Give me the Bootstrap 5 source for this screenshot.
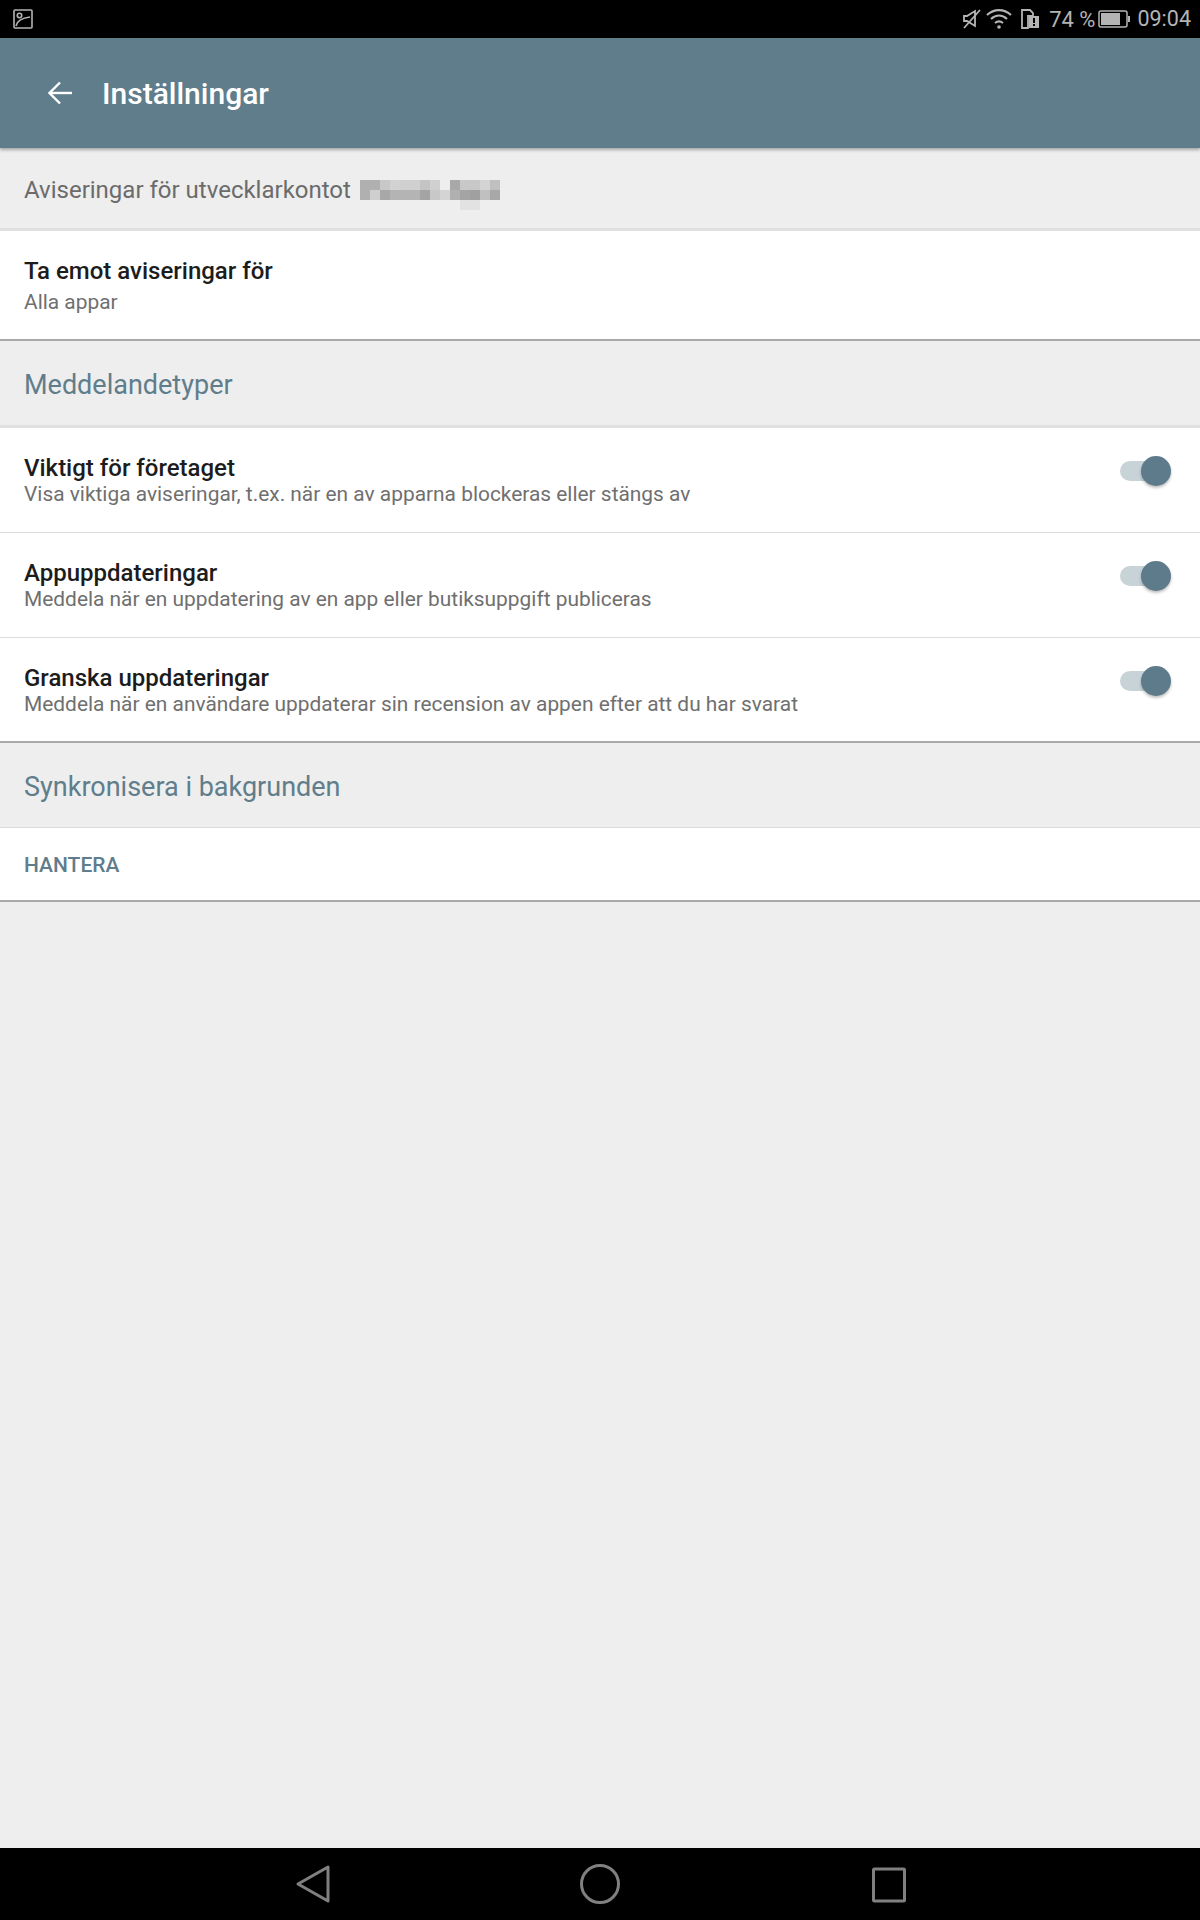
<!DOCTYPE html>
<html lang="sv">
<head>
  <meta charset="UTF-8">
  <meta name="viewport" content="width=device-width, initial-scale=1.0">
  <title>Inställningar</title>
  <link href="https://cdn.jsdelivr.net/npm/bootstrap@5.3.2/dist/css/bootstrap.min.css" rel="stylesheet">
  <style>
    body {
      height: 1920px;
      background-color: #eeeeee;
      font-family: Roboto, "Liberation Sans", sans-serif;
    }

    .status-bar {
      height: 38px;
      background-color: #000;
      color: #b4b4b4;
      font-size: 22px;
      padding: 0 9px 0 13px;
    }

    .status-wifi {
      margin-left: 5px;
    }

    .status-pct {
      margin: 0 3px 0 9px;
    }

    .status-time {
      margin-left: 7px;
      font-size: 21.5px;
    }

    .app-bar {
      height: 110px;
      padding-left: 48px;
      gap: 30px;
      background-color: #607d8b;
      color: #fff;
      font-size: 30px;
      font-weight: 500;
      box-shadow: 0 2px 3px rgba(0, 0, 0, 0.3);
    }

    .account-line {
      height: 83px;
      padding: 4px 24px 0;
      gap: 9px;
      color: #6b6b6b;
      font-size: 24px;
      border-bottom: 3px solid #e0e0e0;
    }

    .account-mask {
      margin-top: 10px;
    }

    .pref-row {
      background-color: #fff;
      padding-left: 24px;
      padding-right: 28px;
      border-bottom: 1px solid #dcdcdc;
    }

    .pref-row.last-row {
      border-bottom: 2px solid #a9a9a9;
    }

    .pref-single {
      height: 110px;
      padding-top: 26px;
    }

    .pref-toggle {
      height: 105px;
      padding-top: 26px;
    }

    .pref-title {
      color: #1c1c1c;
      font-size: 24px;
      font-weight: 500;
      line-height: 28px;
    }

    .pref-sub {
      color: #6f6f6f;
      font-size: 20.9px;
      line-height: 24px;
    }

    .pref-single .pref-sub {
      margin-top: 5px;
    }

    .section-head {
      color: #607d8b;
      font-size: 27px;
      padding: 4px 0 0 24px;
      height: 87px;
      border-bottom: 3px solid #e0e0e0;
    }

    .section-head.thin {
      height: 85px;
      border-bottom: 1px solid #dcdcdc;
    }

    .manage-row {
      height: 74px;
      padding-top: 3px;
      color: #607d8b;
      font-size: 21px;
      font-weight: 500;
    }

    .switch-track {
      position: relative;
      width: 45px;
      height: 20px;
      margin-top: 7px;
      margin-right: 7px;
      border-radius: 10px;
      background-color: #c8d3d8;
    }

    .switch-knob {
      position: absolute;
      top: -5px;
      right: -6px;
      width: 30px;
      height: 30px;
      border-radius: 50%;
      background-color: #5d7b8a;
      box-shadow: 0 2px 3px rgba(0, 0, 0, 0.25);
    }

    .nav-bar {
      height: 72px;
      background-color: #000;
    }

    .nav-bar svg {
      position: absolute;
      top: 16px;
    }

    .nav-back { left: 295px; }
    .nav-home { left: 579px; }
    .nav-recent { left: 868px; }
  </style>
</head>
<body class="d-flex flex-column">

  <div class="status-bar d-flex align-items-center flex-shrink-0">
    <svg width="20" height="20" viewBox="0 0 20 20" fill="none" stroke="#b4b4b4" stroke-width="1.6">
      <rect x="1" y="1" width="18" height="18" rx="1"/>
      <circle cx="6.5" cy="6.5" r="2.2"/>
      <path d="M3 17c1-5 5-8 14-9"/>
    </svg>
    <div class="ms-auto d-flex align-items-center">
      <svg width="18" height="20" viewBox="0 0 18 20" fill="none" stroke="#b4b4b4" stroke-width="1.8">
        <path d="M1 7h3l8-5v15l-8-5H1z"/>
        <path d="M1 19L17 1"/>
      </svg>
      <svg class="status-wifi" width="26" height="20" viewBox="0 0 26 20" fill="none" stroke="#b4b4b4" stroke-width="2.2">
        <path d="M1 6c7-6.500 17-6.500 24 0"/>
        <path d="M5 10c5-4.500 11-4.500 16 0"/>
        <path d="M9 14c2.500-2 5.500-2 8 0"/>
        <circle cx="13" cy="18" r="1.800" fill="#b4b4b4" stroke="none"/>
      </svg>
      <svg class="ms-2" width="20" height="20" viewBox="0 0 20 20">
        <path d="M2 1h8l3 3v3H8v12H2z" fill="none" stroke="#b4b4b4" stroke-width="1.800"/>
        <rect x="9" y="7" width="10" height="12" fill="#b4b4b4"/>
        <rect x="13" y="9" width="2" height="5" fill="#000"/>
        <rect x="13" y="15" width="2" height="2" fill="#000"/>
      </svg>
      <span class="status-pct">74 %</span>
      <svg width="32" height="18" viewBox="0 0 32 18">
        <rect x="1" y="1" width="28" height="16" rx="2" fill="none" stroke="#b4b4b4" stroke-width="1.500"/>
        <rect x="3" y="3" width="19" height="12" fill="#b4b4b4"/>
        <rect x="30" y="6" width="2" height="6" fill="#b4b4b4"/>
      </svg>
      <span class="status-time">09:04</span>
    </div>
  </div>

  <div class="app-bar d-flex align-items-center flex-shrink-0 position-relative">
    <svg width="24" height="24" viewBox="0 0 24 24" fill="none" stroke="#fff" stroke-width="2.400">
      <path d="M24 12H2"/>
      <path d="M12 1.500L1.500 12 12 22.500"/>
    </svg>
    <span>Inställningar</span>
  </div>

  <main class="flex-grow-1">
    <div class="account-line d-flex align-items-center">
      <span>Aviseringar för utvecklarkontot</span>
      <svg width="140" height="30" viewBox="0 0 140 30" class="account-mask" id="mask"></svg>
    </div>

    <div class="pref-row last-row pref-single">
      <div class="pref-title">Ta emot aviseringar för</div>
      <div class="pref-sub">Alla appar</div>
    </div>

    <div class="section-head d-flex align-items-center">Meddelandetyper</div>

    <div class="pref-row pref-toggle d-flex justify-content-between align-items-start">
      <div>
        <div class="pref-title">Viktigt för företaget</div>
        <div class="pref-sub">Visa viktiga aviseringar, t.ex. när en av apparna blockeras eller stängs av</div>
      </div>
      <div class="switch-track"><div class="switch-knob"></div></div>
    </div>
    <div class="pref-row pref-toggle d-flex justify-content-between align-items-start">
      <div>
        <div class="pref-title">Appuppdateringar</div>
        <div class="pref-sub">Meddela när en uppdatering av en app eller butiksuppgift publiceras</div>
      </div>
      <div class="switch-track"><div class="switch-knob"></div></div>
    </div>
    <div class="pref-row last-row pref-toggle d-flex justify-content-between align-items-start">
      <div>
        <div class="pref-title">Granska uppdateringar</div>
        <div class="pref-sub">Meddela när en användare uppdaterar sin recension av appen efter att du har svarat</div>
      </div>
      <div class="switch-track"><div class="switch-knob"></div></div>
    </div>

    <div class="section-head thin d-flex align-items-center">Synkronisera i bakgrunden</div>

    <div class="pref-row last-row manage-row d-flex align-items-center">HANTERA</div>
  </main>

  <div class="nav-bar flex-shrink-0 position-relative">
    <svg class="nav-back" width="36" height="40" viewBox="0 0 36 40" fill="none" stroke="#808080" stroke-width="3" stroke-linejoin="round">
      <path d="M3 20L33 3v34z"/>
    </svg>
    <svg class="nav-home" width="42" height="40" viewBox="0 0 42 40" fill="none" stroke="#808080" stroke-width="3">
      <circle cx="21" cy="20" r="18.500"/>
    </svg>
    <svg class="nav-recent" width="40" height="40" viewBox="0 0 40 40" fill="none" stroke="#808080" stroke-width="3" stroke-linejoin="round">
      <rect x="5.500" y="5" width="31" height="32" rx="1"/>
    </svg>
  </div>

  <script src="https://cdn.jsdelivr.net/npm/bootstrap@5.3.2/dist/js/bootstrap.bundle.min.js"></script>
  <script>
    // pixelated account name, 10px cells
    const cells = [
      ["b0", "b0", "c8", "d2", "d0", "d0", "c4", "d0", "", "a8", "c8", "c8", "d4", "c0"],
      ["b0", "cf", "a8", "b4", "b4", "b4", "a4", "c8", "d4", "b0", "a4", "a0", "c0", "a8"],
      ["", "", "", "", "", "", "", "", "", "", "e2", "e2", "", ""]
    ];
    const mask = document.getElementById("mask");
    cells.forEach((row, y) => row.forEach((c, x) => {
      if (!c) return;
      const r = document.createElementNS("http://www.w3.org/2000/svg", "rect");
      r.setAttribute("x", x * 10);
      r.setAttribute("y", y * 10);
      r.setAttribute("width", 10);
      r.setAttribute("height", 10);
      r.setAttribute("fill", "#" + c + c + c);
      mask.appendChild(r);
    }));
  </script>
</body>
</html>
